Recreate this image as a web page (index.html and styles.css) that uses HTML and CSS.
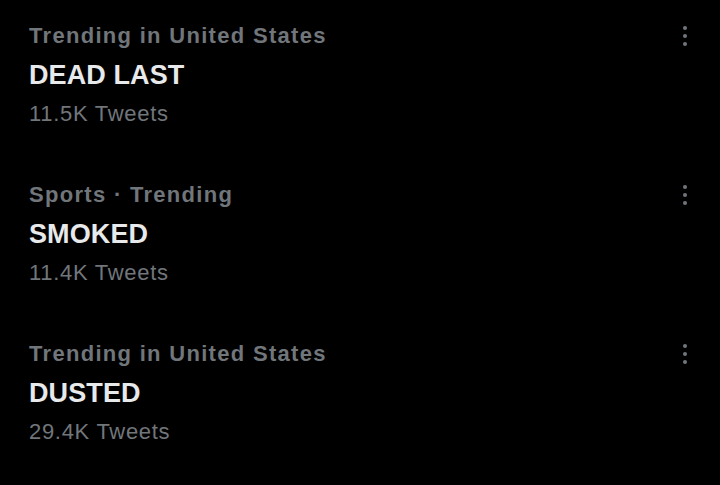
FILE: index.html
```
<!DOCTYPE html>
<html>
<head>
<meta charset="utf-8">
<link rel="stylesheet" href="styles.css">
</head>
<body>
<div class="list">
  <div class="trend">
    <div class="text">
      <div class="meta">Trending in United States</div>
      <div class="title">DEAD LAST</div>
      <div class="count">11.5K Tweets</div>
    </div>
    <div class="more"><span></span><span></span><span></span></div>
  </div>
  <div class="trend">
    <div class="text">
      <div class="meta">Sports · Trending</div>
      <div class="title">SMOKED</div>
      <div class="count">11.4K Tweets</div>
    </div>
    <div class="more"><span></span><span></span><span></span></div>
  </div>
  <div class="trend">
    <div class="text">
      <div class="meta">Trending in United States</div>
      <div class="title">DUSTED</div>
      <div class="count">29.4K Tweets</div>
    </div>
    <div class="more"><span></span><span></span><span></span></div>
  </div>
</div>
</body>
</html>
```
FILE: styles.css
```
html, body {
  margin: 0;
  padding: 0;
  background: #000;
  width: 720px;
  height: 485px;
  overflow: hidden;
  font-family: "Liberation Sans", Arial, sans-serif;
}
.list {
  display: flex;
  flex-direction: column;
  padding: 16px 29px 0 29px;
  gap: 42px;
}
.trend {
  display: flex;
  justify-content: space-between;
  align-items: flex-start;
}
.text {
  display: flex;
  flex-direction: column;
}
.meta {
  color: #71767b;
  font-size: 22px;
  font-weight: bold;
  line-height: 39px;
  letter-spacing: 1.3px;
}
.title {
  color: #e7e9ea;
  font-size: 27px;
  font-weight: bold;
  line-height: 39px;
  letter-spacing: 0.1px;
  padding-top: 1px;
  margin-bottom: -1px;
}
.count {
  color: #71767b;
  font-size: 22px;
  line-height: 39px;
  letter-spacing: 0.7px;
}
.more {
  display: flex;
  flex-direction: column;
  gap: 4px;
  padding-top: 10px;
  margin-right: 4px;
}
.more span {
  width: 4px;
  height: 4px;
  border-radius: 50%;
  background: #71767b;
}
```
